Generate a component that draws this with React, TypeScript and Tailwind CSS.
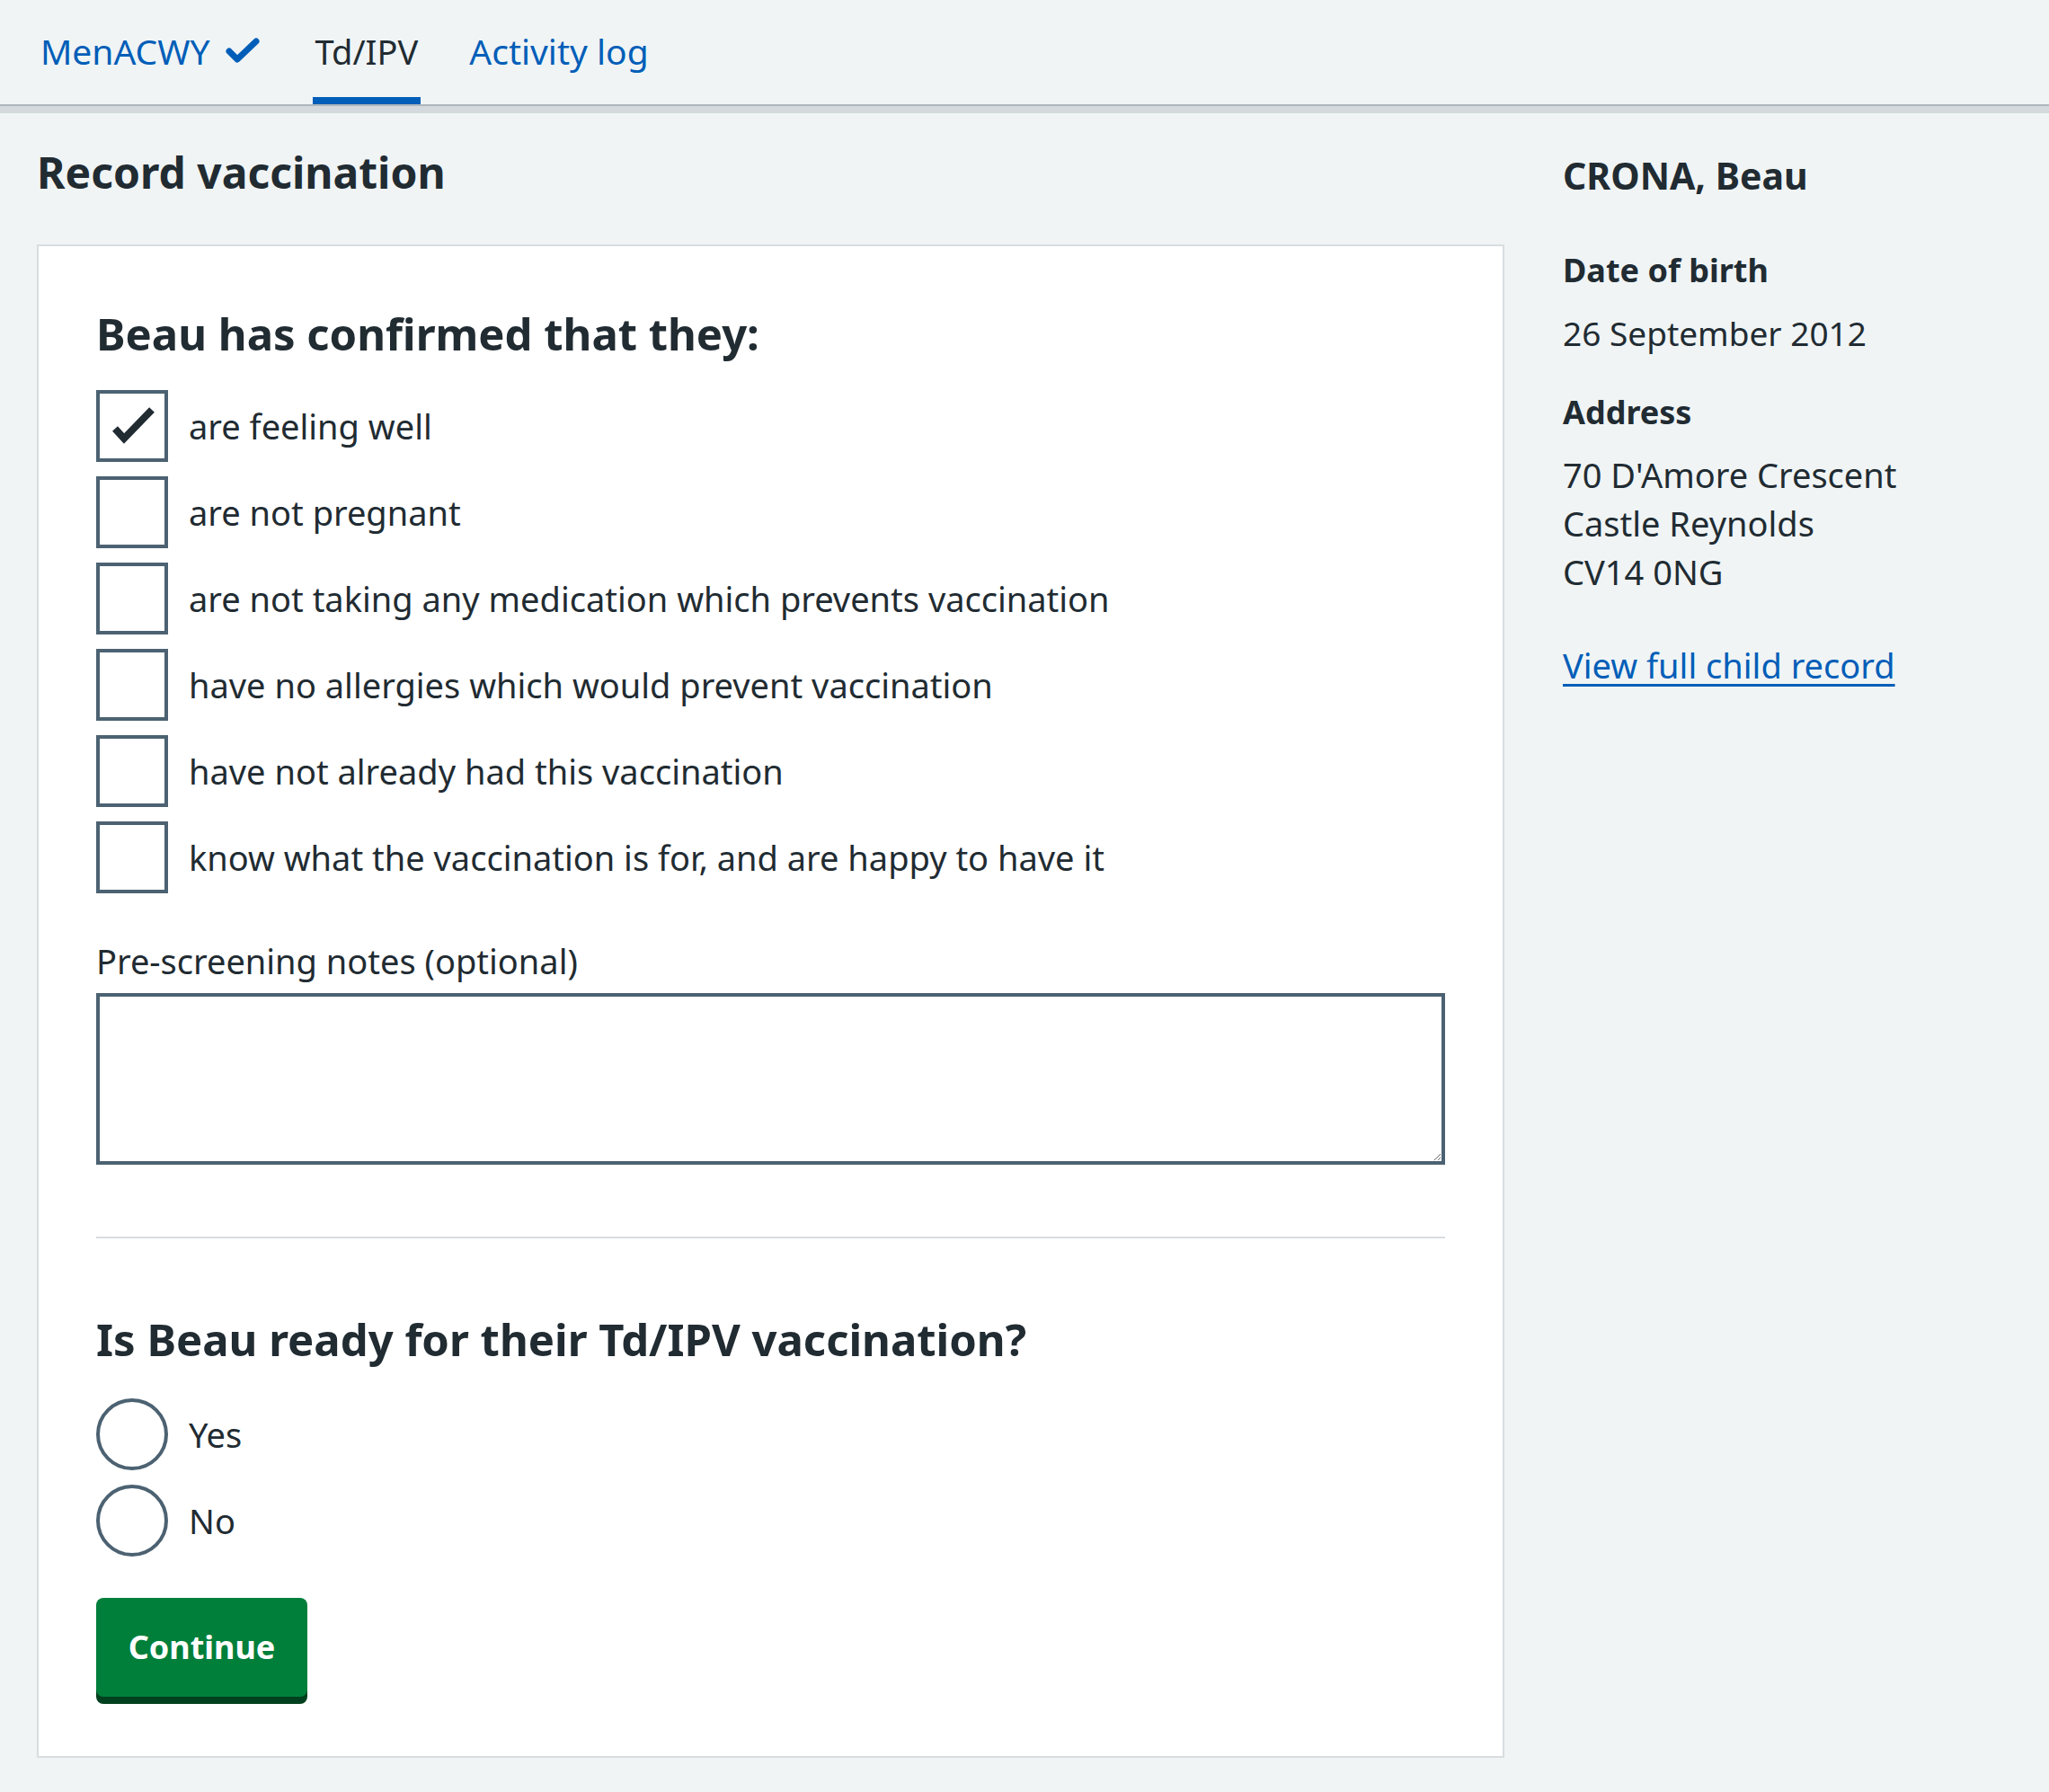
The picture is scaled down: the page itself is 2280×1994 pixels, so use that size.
import { useState } from "react";

const checks = [
  "are feeling well",
  "are not pregnant",
  "are not taking any medication which prevents vaccination",
  "have no allergies which would prevent vaccination",
  "have not already had this vaccination",
  "know what the vaccination is for, and are happy to have it",
];

function TickIcon() {
  return (
    <svg width="40" height="30" viewBox="0 0 40 30" className="ml-[16px]">
      <polyline points="5,15 14,24 35,4" fill="none" stroke="#005eb8" strokeWidth="7" strokeLinecap="round" strokeLinejoin="round" />
    </svg>
  );
}

function Checkbox({ label, checked, onToggle }: { label: string; checked: boolean; onToggle: () => void }) {
  return (
    <label className="flex h-[80px] cursor-pointer flex-row items-center" onClick={onToggle}>
      <span className="relative h-[80px] w-[80px] shrink-0 border-[4px] border-[#4c6272] bg-white">
        {checked && (
          <svg width="72" height="72" viewBox="0 0 72 72" className="absolute left-0 top-0">
            <polyline points="17,39 27,50 58,18" fill="none" stroke="#212b32" strokeWidth="8" strokeLinejoin="miter" />
          </svg>
        )}
      </span>
      <span className="ml-[23px] text-[38px] leading-[56px]">{label}</span>
    </label>
  );
}

function Radio({ label, selected, onSelect }: { label: string; selected: boolean; onSelect: () => void }) {
  return (
    <label className="flex h-[80px] cursor-pointer flex-row items-center" onClick={onSelect}>
      <span className="flex h-[80px] w-[80px] shrink-0 items-center justify-center rounded-full border-[4px] border-[#4c6272] bg-white">
        {selected && <span className="h-[40px] w-[40px] rounded-full bg-[#212b32]"></span>}
      </span>
      <span className="ml-[23px] text-[38px] leading-[56px]">{label}</span>
    </label>
  );
}

export default function App() {
  const [checked, setChecked] = useState<boolean[]>([true, false, false, false, false, false]);
  const [ready, setReady] = useState<"yes" | "no" | null>(null);

  function toggle(i: number) {
    setChecked(checked.map((c, idx) => (idx === i ? !c : c)));
  }

  return (
    <div className="min-h-[1994px] w-[2280px] bg-[#f0f4f5] text-[#212b32]" style={{ fontFamily: '"Noto Sans", "Open Sans", sans-serif' }}>
      {/* tabs */}
      <nav className="border-b-2 border-[#aeb7bd]">
        <ul className="flex h-[116px] flex-row items-stretch pl-[41px]">
          <li className="flex flex-row items-center px-[4px] pb-[2px] text-[39px] text-[#005eb8]">
            <a href="#">MenACWY</a>
            <TickIcon />
          </li>
          <li className="ml-[54px] flex items-center border-b-[8px] border-[#005eb8] px-[3px] pt-[6px] text-[38px]">
            Td/IPV
          </li>
          <li className="ml-[50px] flex items-center px-[4px] pb-[2px] text-[39px] text-[#005eb8]">
            <a href="#">Activity log</a>
          </li>
        </ul>
      </nav>
      <div className="h-[8px] bg-[#d3d9dc]"></div>

      <main className="flex flex-row px-[41px] pt-[34px]">
        <div className="w-[1633px] shrink-0">
          <h1 className="text-[48px] font-bold leading-[64px]">Record vaccination</h1>

          <div className="mt-[48px] border-2 border-[#d8dde0] bg-white px-[64px] pb-[66px] pt-[64px]">
            <h2 className="text-[49px] font-bold leading-[66px]">Beau has confirmed that they:</h2>
            <div className="mt-[30px] flex flex-col gap-[16px]">
              {checks.map((c, i) => (
                <Checkbox key={c} label={c} checked={checked[i]} onToggle={() => toggle(i)} />
              ))}
            </div>

            <label className="mt-[51px] block text-[38px] leading-[48px]">Pre-screening notes (optional)</label>
            <textarea className="mt-[12px] block h-[191px] w-full border-[4px] border-[#4c6272] bg-white p-[10px] text-[38px] outline-none" />

            <hr className="mt-[80px] border-t-2 border-[#d8dde0]" />

            <h2 className="mt-[79px] text-[49px] font-bold leading-[66px]">Is Beau ready for their Td/IPV vaccination?</h2>
            <div className="mt-[33px] flex flex-col gap-[16px]">
              <Radio label="Yes" selected={ready === "yes"} onSelect={() => setReady("yes")} />
              <Radio label="No" selected={ready === "no"} onSelect={() => setReady("no")} />
            </div>

            <button className="mt-[46px] flex h-[110px] w-[235px] items-center justify-center rounded-[8px] bg-[#007f3b] text-[36px] font-bold text-white shadow-[0_8px_0_#00401e]">
              Continue
            </button>
          </div>
        </div>

        <aside className="ml-[65px] mt-[11px] flex flex-col">
          <h2 className="text-[41px] font-bold leading-[48px]">CRONA, Beau</h2>
          <h3 className="mt-[55px] text-[36px] font-bold leading-[54px]">Date of birth</h3>
          <p className="mt-[16px] text-[37px] leading-[54px]">26 September 2012</p>
          <h3 className="mt-[34px] text-[36px] font-bold leading-[54px]">Address</h3>
          <p className="mt-[15px] text-[38px] leading-[54px]">
            70 D'Amore Crescent
            <br />
            Castle Reynolds
            <br />
            CV14 0NG
          </p>
          <a href="#" className="mt-[50px] self-start text-[38px] leading-[54px] text-[#005eb8] underline decoration-[3px] underline-offset-[6px]">
            View full child record
          </a>
        </aside>
      </main>
    </div>
  );
}
